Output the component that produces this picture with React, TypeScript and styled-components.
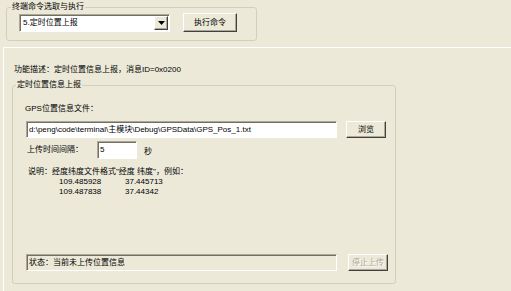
import React from "react";
import styled, { createGlobalStyle } from "styled-components";

const GlobalStyle = createGlobalStyle`
  html, body {
    margin: 0;
    padding: 0;
    background: #ece9d8;
  }
  body {
    font-family: "Liberation Sans", "Noto Sans CJK SC", sans-serif;
    font-size: 8px;
    color: #000;
  }
`;

const Window = styled.div`
  width: 511px;
  height: 291px;
  display: flex;
  flex-direction: column;
  overflow: hidden;
  background: #ece9d8;
`;

const TopArea = styled.div`
  padding: 1px 0 0 6px;
`;

const Group = styled.fieldset<{ $w: number }>`
  box-sizing: border-box;
  width: ${(p) => p.$w}px;
  margin: 0;
  padding: 0;
  border: 1px solid #d0d0bf;
  border-radius: 3px;
  min-width: 0;
  flex-shrink: 0;
`;

const Legend = styled.legend<{ $indent: number }>`
  margin-left: ${(p) => p.$indent}px;
  padding: 0 1px;
  line-height: 12px;
  height: 12px;
`;

const CommandRow = styled.div`
  box-sizing: border-box;
  display: flex;
  align-items: flex-start;
  gap: 13px;
  height: 27px;
  padding-left: 12px;
`;

const Combo = styled.div`
  box-sizing: border-box;
  width: 151px;
  height: 18px;
  margin-top: 1px;
  background: #fff;
  border: 1px solid;
  border-color: #aca899 #fff #fff #aca899;
  box-shadow: inset 1px 1px 0 #716f64;
  display: flex;
  align-items: center;
  padding: 1px 1px 1px 3px;
`;

const ComboText = styled.span`
  flex: 1;
  line-height: 12px;
`;

const ComboArrow = styled.div`
  box-sizing: border-box;
  width: 14px;
  height: 14px;
  background: #ece9d8;
  border: 1px solid;
  border-color: #fff #404040 #404040 #fff;
  box-shadow: inset -1px -1px 0 #aca899;
  display: flex;
  align-items: center;
  justify-content: center;
`;

const Button = styled.div<{ $w: number; $h: number; $disabled?: boolean }>`
  box-sizing: border-box;
  width: ${(p) => p.$w}px;
  height: ${(p) => p.$h}px;
  background: #ece9d8;
  border: 1px solid;
  border-color: #fff #404040 #404040 #fff;
  box-shadow: inset -1px -1px 0 #aca899;
  display: flex;
  align-items: center;
  justify-content: center;
  line-height: 12px;
  color: ${(p) => (p.$disabled ? "#aca899" : "#000")};
  text-shadow: ${(p) => (p.$disabled ? "1px 1px 0 #fff" : "none")};
  flex-shrink: 0;
`;

const Panel = styled.div`
  flex: 1;
  margin: 6px 0 0 3px;
  border-top: 1px solid #fff;
  border-left: 1px solid #fff;
  padding: 16px 0 0 8px;
  display: flex;
  flex-direction: column;
`;

const Description = styled.div`
  margin-left: 2px;
  line-height: 12px;
  margin-bottom: 3px;
`;

const GroupBody = styled.div`
  box-sizing: border-box;
  height: 192px;
  display: flex;
  flex-direction: column;
  padding: 12px 0 12px 12px;
`;

const Label = styled.div`
  line-height: 12px;
`;

const Row = styled.div<{ $gap: number; $top: number; $left?: number }>`
  display: flex;
  align-items: center;
  gap: ${(p) => p.$gap}px;
  margin-top: ${(p) => p.$top}px;
  margin-left: ${(p) => p.$left ?? 0}px;
`;

const Edit = styled.div<{ $w: number; $h: number; $face?: boolean }>`
  box-sizing: border-box;
  width: ${(p) => p.$w}px;
  height: ${(p) => p.$h}px;
  background: ${(p) => (p.$face ? "#ece9d8" : "#fff")};
  border: 1px solid;
  border-color: #aca899 #fff #fff #aca899;
  box-shadow: inset 1px 1px 0 #716f64;
  padding: 0 2px;
  display: flex;
  align-items: center;
  line-height: 12px;
  white-space: nowrap;
  overflow: hidden;
  flex-shrink: 0;
`;

const IntervalLabel = styled.span`
  width: 63px;
  line-height: 12px;
`;

const Note = styled.div`
  margin: 8px 0 0 3px;
  line-height: 10px;
`;

const Samples = styled.div`
  display: grid;
  grid-template-columns: 66px 66px;
  padding-left: 34px;
  line-height: 10px;
`;

const StatusRow = styled(Row)`
  margin-top: auto;
`;

const samples = [
  ["109.485928", "37.445713"],
  ["109.487838", "37.44342"],
];

const DownArrow = () => (
  <svg width="7" height="4" viewBox="0 0 7 4">
    <path d="M0 0h7L3.5 4z" fill="#000" />
  </svg>
);

export default function App() {
  return (
    <Window>
      <GlobalStyle />
      <TopArea>
        <Group $w={251}>
          <Legend $indent={4}>终端命令选取与执行</Legend>
          <CommandRow>
            <Combo>
              <ComboText>5.定时位置上报</ComboText>
              <ComboArrow>
                <DownArrow />
              </ComboArrow>
            </Combo>
            <Button $w={54} $h={19}>执行命令</Button>
          </CommandRow>
        </Group>
      </TopArea>
      <Panel>
        <Description>功能描述：定时位置信息上报，消息ID=0x0200</Description>
        <Group $w={384}>
          <Legend $indent={3}>定时位置信息上报</Legend>
          <GroupBody>
            <Label>GPS位置信息文件：</Label>
            <Row $gap={9} $top={6} $left={1}>
              <Edit $w={311} $h={17}>
                d:\peng\code\terminal\主模块\Debug\GPSData\GPS_Pos_1.txt
              </Edit>
              <Button $w={40} $h={17}>浏览</Button>
            </Row>
            <Row $gap={7} $top={3} $left={2}>
              <IntervalLabel>上传时间间隔：</IntervalLabel>
              <Edit $w={40} $h={18}>5</Edit>
              <span>秒</span>
            </Row>
            <Note>说明：经度纬度文件格式"经度 纬度"，例如：</Note>
            <Samples>
              {samples.map(([lng, lat]) => (
                <React.Fragment key={lng}>
                  <span>{lng}</span>
                  <span>{lat}</span>
                </React.Fragment>
              ))}
            </Samples>
            <StatusRow $gap={11} $top={0} $left={1}>
              <Edit $w={311} $h={17} $face>
                状态：当前未上传位置信息
              </Edit>
              <Button $w={40} $h={17} $disabled>停止上传</Button>
            </StatusRow>
          </GroupBody>
        </Group>
      </Panel>
    </Window>
  );
}
